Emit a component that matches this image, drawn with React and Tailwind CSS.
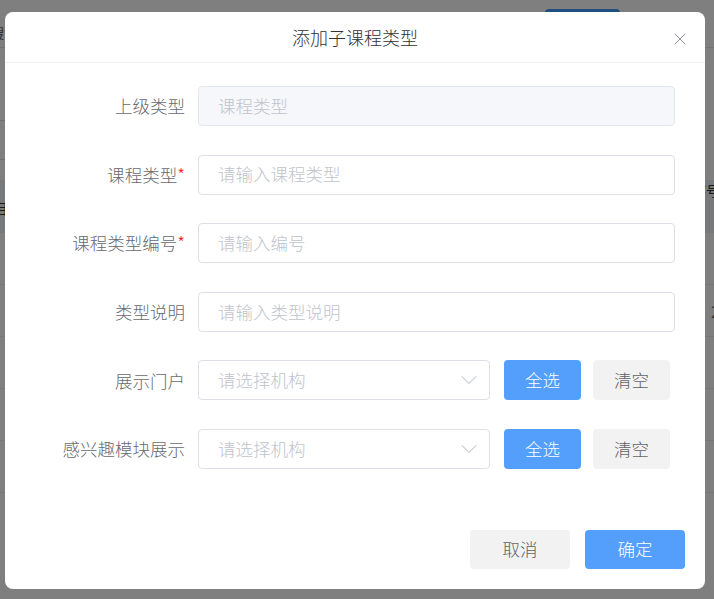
import { X, ChevronDown } from "lucide-react";

const font = { fontFamily: '"Noto Sans CJK SC", "Noto Sans", sans-serif' };

const FormRow = ({ label, required, children }) => (
  <div className="flex items-center h-10">
    <label className="w-[160px] shrink-0 text-right text-[17.5px] text-[#666a70] leading-none whitespace-nowrap">
      {label}
      {required && <span className="text-[#ff1a1a]">*</span>}
    </label>
    <div className="ml-[13px] flex-1 flex items-center h-10">{children}</div>
  </div>
);

const TextInput = ({ placeholder, disabled }) => (
  <div
    className={`w-full h-10 rounded-[4px] border flex items-center px-[19px] text-[17.5px] ${
      disabled ? "bg-[#f5f7fa] border-[#e4e7ed]" : "bg-white border-[#dcdfe6]"
    }`}
  >
    <span className="text-[#c0c4cc]">{placeholder}</span>
  </div>
);

const SelectRow = () => (
  <div className="flex items-center w-full">
    <div className="w-[292px] h-10 rounded-[4px] border border-[#dcdfe6] bg-white flex items-center justify-between pl-[19px] pr-[6px] text-[17.5px]">
      <span className="text-[#c0c4cc]">请选择机构</span>
      <ChevronDown className="w-[28px] h-[28px] text-[#c0c4cc]" strokeWidth={0.9} />
    </div>
    <button className="ml-[14px] w-[77px] h-10 rounded-[4px] bg-[#559ffc] text-white text-[17.5px]">
      全选
    </button>
    <button className="ml-[12px] w-[77px] h-10 rounded-[4px] bg-[#f2f2f2] text-[#606266] text-[17.5px]">
      清空
    </button>
  </div>
);

const Dialog = () => (
  <div className="absolute left-[5px] top-[12px] w-[700px] h-[577px] bg-white rounded-lg flex flex-col font-light">
    {/* header */}
    <div className="relative h-[51px] shrink-0 flex items-center justify-center border-b border-[#f2f2f2]">
      <h2 className="text-[18px] text-[#303133]">添加子课程类型</h2>
      <X className="absolute right-[15px] top-[17px] w-[20px] h-[20px] text-[#909399]" strokeWidth={1.2} />
    </div>

    {/* body */}
    <div className="flex flex-col gap-[28.6px] pt-[23px] pl-[20px] pr-[30px]">
      <FormRow label="上级类型">
        <TextInput placeholder="课程类型" disabled />
      </FormRow>
      <FormRow label="课程类型" required>
        <TextInput placeholder="请输入课程类型" />
      </FormRow>
      <FormRow label="课程类型编号" required>
        <TextInput placeholder="请输入编号" />
      </FormRow>
      <FormRow label="类型说明">
        <TextInput placeholder="请输入类型说明" />
      </FormRow>
      <FormRow label="展示门户">
        <SelectRow />
      </FormRow>
      <FormRow label="感兴趣模块展示">
        <SelectRow />
      </FormRow>
    </div>

    {/* footer */}
    <div className="mt-auto flex justify-end gap-[15px] pr-[20px] pb-[20px]">
      <button className="w-[100px] h-[39px] rounded-[4px] bg-[#f2f2f2] text-[#606266] text-[17.5px]">
        取消
      </button>
      <button className="w-[100px] h-[39px] rounded-[4px] bg-[#559ffc] text-white text-[17.5px]">
        确定
      </button>
    </div>
  </div>
);

export default function App() {
  return (
    <div className="relative w-[714px] h-[599px] overflow-hidden bg-white" style={font}>
      {/* page behind the modal */}
      <div className="flex flex-col text-[14px] text-[#606266]">
        <div className="h-[48px] border-b border-[#e4e7ed] flex items-start justify-between pr-[94px]">
          <span className="mt-[22px] -ml-[10px]">搜索</span>
          <div className="w-[75px] h-[30px] mt-[9px] rounded-[4px] bg-[#409eff]" />
        </div>
        <div className="h-[72px]" />
        <div className="h-[40px] w-[120px] -ml-[100px] rounded-[4px] border border-[#dcdfe6]" />
        <div className="h-[20px]" />
        <div className="h-[53px] bg-[#f0f2f5] flex justify-between -mx-[6px] text-[#303133]">
          <span className="mt-[18px]">目录</span>
          <span className="mt-[0px]">序号</span>
        </div>
        <div className="h-[52px] border-b border-[#ebeef5]" />
        <div className="h-[52px] border-b border-[#ebeef5] flex items-center justify-end">
          <span className="-mr-[6px] text-[16px]">2</span>
        </div>
        <div className="h-[52px] border-b border-[#ebeef5]" />
        <div className="h-[52px] border-b border-[#ebeef5]" />
        <div className="h-[52px] border-b border-[#ebeef5]" />
      </div>

      {/* overlay */}
      <div className="absolute inset-0 bg-black/50" />
      <Dialog />
    </div>
  );
}
